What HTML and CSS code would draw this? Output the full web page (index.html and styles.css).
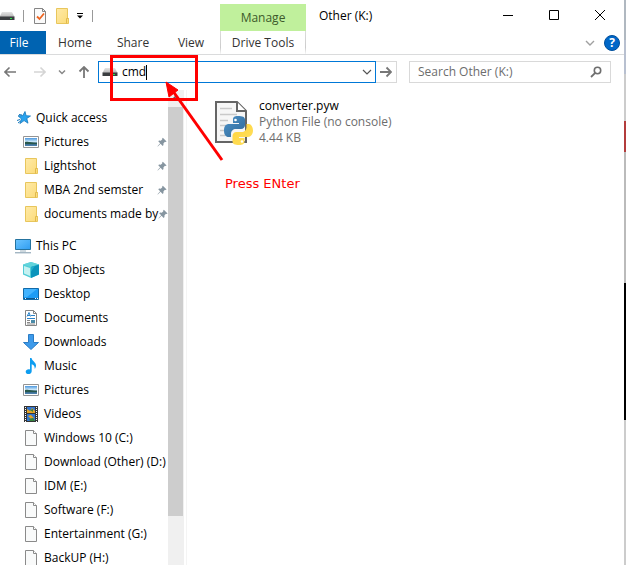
FILE: index.html
```html
<!DOCTYPE html>
<html lang="en">
<head>
<meta charset="utf-8">
<title>Other (K:)</title>
<link rel="stylesheet" href="styles.css">
</head>
<body>
<svg class="defs" aria-hidden="true">
  <defs>
    <linearGradient id="sky" x1="0" y1="0" x2="1" y2="1"><stop offset="0" stop-color="#6cc5ff"/><stop offset="1" stop-color="#2f9df0"/></linearGradient>
    <linearGradient id="photo" x1="0" y1="0" x2="0" y2="1"><stop offset="0" stop-color="#4c97de"/><stop offset=".5" stop-color="#d9f0fb"/><stop offset=".6" stop-color="#2d5968"/><stop offset="1" stop-color="#4f86b8"/></linearGradient>
    <linearGradient id="metal" x1="0" y1="0" x2="0" y2="1"><stop offset="0" stop-color="#e4e4e4"/><stop offset="1" stop-color="#b5b5b5"/></linearGradient>
    <linearGradient id="fold" x1="0" y1="0" x2="1" y2="1"><stop offset="0" stop-color="#ffeaa8"/><stop offset="1" stop-color="#fbdb78"/></linearGradient>
    <linearGradient id="pyblue" x1="0" y1="0" x2="1" y2="1"><stop offset="0" stop-color="#4d92c8"/><stop offset="1" stop-color="#306998"/></linearGradient>
    <linearGradient id="pyyellow" x1="0" y1="0" x2="1" y2="1"><stop offset="0" stop-color="#ffd43b"/><stop offset="1" stop-color="#ffe060"/></linearGradient>
  </defs>
  <symbol id="i-drive" viewBox="0 0 16 16"><path d="M3 4h10l2.500 5H.5z" fill="url(#metal)"/><path d="M.5 8.500h15V12H.5z" fill="#3a3d40"/><path d="M11 10h2v1h-2z" fill="#2be04a"/></symbol>
  <symbol id="i-folder" viewBox="0 0 16 16"><path d="M2.500.5h11v10h1v5h-12z" fill="url(#fold)" stroke="#e8c65c"/><path d="M12.500 15.500v-5h2" fill="none" stroke="#e0b94d"/></symbol>
  <symbol id="i-star" viewBox="0 0 16 16"><path d="M10 1.500l1.100 4.200 4.400.3-3.700 2.500 1.200 4.700-3.900-2.600-4.200 3 1.500-4.700L3 5.800l4.800-.2z" fill="#2aa3ee" stroke="#1679bd" stroke-width=".8"/><path d="M2 10.500l3-1M3 13l2.500-2M4 4.500l3 .5" stroke="#1679bd"/></symbol>
  <symbol id="i-picture" viewBox="0 0 16 16"><path d="M.5 2.500h15v11H.5z" fill="#fff" stroke="#949494"/><path d="M2 4h12v8H2z" fill="url(#photo)"/><path d="M2 8c3-1 5 .5 12 1v1H2z" fill="#28584c"/></symbol>
  <symbol id="i-pc" viewBox="0 0 16 16"><path d="M.5 1.500h15v10H.5z" fill="url(#sky)" stroke="#25739f"/><path d="M5 13h6" stroke="#9eb3c0"/><path d="M0 14.800h16" stroke="#7d98aa"/></symbol>
  <symbol id="i-cube" viewBox="0 0 16 16"><path d="M8 0l8 2.500v10L8 16l-8-3.500v-10z" fill="#52ccd6"/><path d="M0 2.500L8 0l8 2.500L8 5z" fill="#62d4dc"/><path d="M8 5l8-2.500v10L8 16z" fill="#0b94bb"/><path d="M1 4l6 2v8l-6-2.500z" fill="#c4f1f1"/><path d="M8 5l4-1.200-4 6z" fill="#22aecb"/></symbol>
  <symbol id="i-desktop" viewBox="0 0 16 16"><path d="M.5 2.500h15v11H.5z" fill="#1c9cf6" stroke="#126aa8"/><path d="M1 3h13L4 11H1z" fill="#43b4ff"/><path d="M1 12.500h14" stroke="#0b568d"/><path d="M2 12.500h1M12 12.500h1M14 12.500h1" stroke="#fff"/></symbol>
  <symbol id="i-doc" viewBox="0 0 16 16"><path d="M2.500.5h8l3 3v12h-11z" fill="#fff" stroke="#858585"/><path d="M10.500.5v3h3" fill="none" stroke="#858585"/><path d="M4 6.500l2-4 1.500 4M4.500 5.500H7M8 5.500h4M4 8.500h8" fill="none" stroke="#2b83c9"/><path d="M4 10.500h3M4 12.500h3M4 14h8" stroke="#888"/><path d="M8 10h4v3H8z" fill="#4b8ba8"/></symbol>
  <symbol id="i-down" viewBox="0 0 16 16"><path d="M5.500.5h5v8h5L8 15.500.5 8.500h5z" fill="#3d9aea" stroke="#2b7cc5"/></symbol>
  <symbol id="i-music" viewBox="0 0 16 16"><path d="M7 0h1.500c.5 3 4.500 4 4.500 7.500 0 1.300-.5 2.500-1.300 3.500.3-3-1.200-4.200-3-4.800V13c0 4-6 4-6 .8 0-2 2.300-3 4.300-2.300z" fill="#0e9df0"/></symbol>
  <symbol id="i-video" viewBox="0 0 16 16"><path d="M1 0h14v16H1z" fill="#353535"/><path d="M4 1h8v6H4zM4 8h8v7H4z" fill="#3375ce"/><path d="M4 3l3 2 2-3 3 3v2H4zM5 10l3-1 3 3-3 1z" fill="#e2a326"/><path d="M7 4l3-1v3zM6 13l4-1 2 3H7z" fill="#38833b"/><path d="M2.500 1v15M13.500 1v15" stroke="#fff" stroke-dasharray="1 1"/></symbol>
  <symbol id="i-file" viewBox="0 0 16 16"><path d="M2.500.5h8l3 3v12h-11z" fill="#f9fafa" stroke="#8a8a8a"/><path d="M10.500.5v3h3" fill="#fff" stroke="#8a8a8a"/></symbol>
  <symbol id="i-pin" viewBox="0 0 12 12"><path d="M7 1l4.500 4.500-1.200.6-.8-.3-1.800 1.900.1 2-1 1-2.500-2.500L1 11.500.6 11l3.200-3.400L1.500 5.200l1-.9 2 .1 1.900-1.700-.2-.9z" fill="#8695a0"/></symbol>
</svg>

<div class="desktop">
  <div class="window">
    <header class="titlebar">
      <div class="quickbar">
        <svg class="ico" viewBox="0 0 16 16"><use href="#i-drive"/></svg>
        <span class="sep"></span>
        <button class="plain" aria-label="Properties"><svg class="ico" viewBox="0 0 16 16"><path d="M2.500.5h8l3 3v12h-11z" fill="#fafafa" stroke="#858585"/><path d="M10.500.5v3h3" fill="none" stroke="#858585"/><path d="M5 8.500l2.500 2.500L12 5.500" fill="none" stroke="#ee6420" stroke-width="1.800"/></svg></button>
        <button class="plain" aria-label="New folder"><svg class="ico" viewBox="0 0 16 16"><use href="#i-folder"/></svg></button>
        <button class="plain" aria-label="Customize toolbar"><svg class="caretdown" viewBox="0 0 8 6"><path d="M1 .5h6" stroke="#000"/><path d="M1 2.500h6L4 5.500z"/></svg></button>
        <span class="sep"></span>
      </div>
      <div class="context">Manage</div>
      <h1 class="title">Other (K:)</h1>
      <div class="controls">
        <button class="plain" aria-label="Minimize"><svg viewBox="0 0 10 10"><path d="M0 5.500h10" stroke="#000"/></svg></button>
        <button class="plain" aria-label="Maximize"><svg viewBox="0 0 10 10"><path d="M.5.5h9v9h-9z" fill="none" stroke="#000"/></svg></button>
        <button class="plain" aria-label="Close"><svg viewBox="0 0 10 10"><path d="M0 0l10 10M10 0L0 10" stroke="#000"/></svg></button>
      </div>
    </header>

    <nav class="ribbon">
      <button class="tab file">File</button>
      <button class="tab">Home</button>
      <button class="tab">Share</button>
      <button class="tab">View</button>
      <button class="tab tools">Drive Tools</button>
      <div class="ribbon-end">
        <button class="plain" aria-label="Expand ribbon"><svg class="chev" viewBox="0 0 10 10"><path d="M1 3l4 4 4-4" fill="none" stroke="#a0a0a0" stroke-width="1.400"/></svg></button>
        <button class="help" aria-label="Help">?</button>
      </div>
    </nav>

    <div class="navrow">
      <div class="arrows">
        <button class="plain" aria-label="Back"><svg viewBox="0 0 12 12"><path d="M12 6H1M5.500 1.500L1 6l4.500 4.500" fill="none" stroke="#777" stroke-width="1.600"/></svg></button>
        <button class="plain" aria-label="Forward"><svg viewBox="0 0 12 12"><path d="M0 6h11M6.500 1.500L11 6l-4.500 4.500" fill="none" stroke="#d5d5d5" stroke-width="1.600"/></svg></button>
        <button class="plain" aria-label="Recent locations"><svg class="small" viewBox="0 0 8 8"><path d="M1 2.500l3 3 3-3" fill="none" stroke="#888" stroke-width="1.500"/></svg></button>
        <button class="plain" aria-label="Up"><svg viewBox="0 0 12 12"><path d="M6 12V1M1.500 5.500L6 1l4.500 4.500" fill="none" stroke="#777" stroke-width="1.800"/></svg></button>
      </div>
      <div class="address">
        <svg class="ico" viewBox="0 0 16 16"><use href="#i-drive"/></svg>
        <input class="path" type="text" value="cmd" aria-label="Address">
        <span class="cursor"></span>
        <button class="plain" aria-label="Previous locations"><svg class="chev" viewBox="0 0 10 10"><path d="M1 3l4 4 4-4" fill="none" stroke="#555" stroke-width="1.200"/></svg></button>
      </div>
      <button class="go" aria-label="Go"><svg viewBox="0 0 12 12"><path d="M0 6h11M6.500 1.500L11 6l-4.500 4.500" fill="none" stroke="#777" stroke-width="1.800"/></svg></button>
      <div class="search">
        <input type="text" placeholder="Search Other (K:)" aria-label="Search Other (K:)">
        <svg viewBox="0 0 12 12"><circle cx="7.500" cy="4.500" r="3.200" fill="none" stroke="#6e6e6e" stroke-width="1.600"/><path d="M5.200 6.800L1 11" stroke="#6e6e6e" stroke-width="1.800"/></svg>
      </div>
    </div>

    <div class="body">
      <aside class="tree">
        <div class="group">
          <a class="row root" href="#"><svg class="ico" viewBox="0 0 16 16"><use href="#i-star"/></svg><span>Quick access</span></a>
          <a class="row" href="#"><svg class="ico" viewBox="0 0 16 16"><use href="#i-picture"/></svg><span>Pictures</span><svg class="pin" viewBox="0 0 12 12"><use href="#i-pin"/></svg></a>
          <a class="row" href="#"><svg class="ico" viewBox="0 0 16 16"><use href="#i-folder"/></svg><span>Lightshot</span><svg class="pin" viewBox="0 0 12 12"><use href="#i-pin"/></svg></a>
          <a class="row" href="#"><svg class="ico" viewBox="0 0 16 16"><use href="#i-folder"/></svg><span>MBA 2nd semster</span><svg class="pin" viewBox="0 0 12 12"><use href="#i-pin"/></svg></a>
          <a class="row" href="#"><svg class="ico" viewBox="0 0 16 16"><use href="#i-folder"/></svg><span>documents made by</span><svg class="pin" viewBox="0 0 12 12"><use href="#i-pin"/></svg></a>
        </div>
        <div class="group">
          <a class="row root" href="#"><svg class="ico" viewBox="0 0 16 16"><use href="#i-pc"/></svg><span>This PC</span></a>
          <a class="row" href="#"><svg class="ico" viewBox="0 0 16 16"><use href="#i-cube"/></svg><span>3D Objects</span></a>
          <a class="row" href="#"><svg class="ico" viewBox="0 0 16 16"><use href="#i-desktop"/></svg><span>Desktop</span></a>
          <a class="row" href="#"><svg class="ico" viewBox="0 0 16 16"><use href="#i-doc"/></svg><span>Documents</span></a>
          <a class="row" href="#"><svg class="ico" viewBox="0 0 16 16"><use href="#i-down"/></svg><span>Downloads</span></a>
          <a class="row" href="#"><svg class="ico" viewBox="0 0 16 16"><use href="#i-music"/></svg><span>Music</span></a>
          <a class="row" href="#"><svg class="ico" viewBox="0 0 16 16"><use href="#i-picture"/></svg><span>Pictures</span></a>
          <a class="row" href="#"><svg class="ico" viewBox="0 0 16 16"><use href="#i-video"/></svg><span>Videos</span></a>
          <a class="row" href="#"><svg class="ico" viewBox="0 0 16 16"><use href="#i-file"/></svg><span>Windows 10 (C:)</span></a>
          <a class="row" href="#"><svg class="ico" viewBox="0 0 16 16"><use href="#i-file"/></svg><span>Download (Other) (D:)</span></a>
          <a class="row" href="#"><svg class="ico" viewBox="0 0 16 16"><use href="#i-file"/></svg><span>IDM (E:)</span></a>
          <a class="row" href="#"><svg class="ico" viewBox="0 0 16 16"><use href="#i-file"/></svg><span>Software (F:)</span></a>
          <a class="row" href="#"><svg class="ico" viewBox="0 0 16 16"><use href="#i-file"/></svg><span>Entertainment (G:)</span></a>
          <a class="row" href="#"><svg class="ico" viewBox="0 0 16 16"><use href="#i-file"/></svg><span>BackUP (H:)</span></a>
        </div>
      </aside>
      <div class="scroll">
        <svg class="scroll-up" viewBox="0 0 15 17"><path d="M4 10l3.500-3.500L11 10" fill="none" stroke="#606060" stroke-width="1.500"/></svg>
        <div class="thumb"></div>
      </div>
      <main class="files">
        <a class="item" href="#">
          <svg class="fileicon" viewBox="0 0 38 44">
            <path d="M1 1h21l9 9v31H1z" fill="#f6f6f6" stroke="#656565" stroke-width="2"/>
            <path d="M22 1v9h9" fill="#fff" stroke="#656565" stroke-width="2"/>
            <path d="M5 7.500h12M5 13.500h17M5 19.500h8M5 24.500h6M5 29.500h5M5 34.500h5" stroke="#c9c9c9" stroke-width="1.500"/>
            <g transform="translate(9 15)">
              <path d="M14 0c-4 0-5 1.500-5 3.500V7h6v1H5C2 8 0 10 0 14.500S2 21 4.500 21H7v-3c0-3 2-5 5-5h5c2.500 0 4-2 4-4V3.500C21 1 18.500 0 14 0z" fill="url(#pyblue)"/>
              <path d="M15 29c4 0 5.500-1.500 5.500-3.500V22H15v-1h9c3 0 5-3 5-6.500S27 8 25 8h-2.500v3c0 3-2 5-5 5h-5c-2.500 0-4 2-4 4v5.500c0 2.500 2.500 3.500 6.500 3.500z" fill="url(#pyyellow)"/>
              <circle cx="11.500" cy="4" r="1.300" fill="#fff"/><circle cx="18" cy="25.500" r="1.300" fill="#fff"/>
            </g>
          </svg>
          <span class="meta"><span class="name">converter.pyw</span><span>Python File (no console)</span><span>4.44 KB</span></span>
        </a>
      </main>
    </div>
  </div>
  <div class="behind"></div>

  <div class="note">
    <svg viewBox="0 0 130 112" aria-hidden="true">
      <path d="M1.500 2.500h85v43h-85z" fill="none" stroke="#f00" stroke-width="3"/>
      <path d="M60 33l52 73" stroke="#f00" stroke-width="3"/>
      <path d="M56 28l12 8-9 7z" fill="#f00" stroke="#f00"/>
    </svg>
    <p>Press ENter</p>
  </div>
</div>
</body>
</html>
```

FILE: styles.css
```css
* { box-sizing: border-box; }

body {
  margin: 0;
  font: 12px/16px "Open Sans", "Noto Sans", sans-serif;
  color: #000;
  background: #fff;
}

button, input {
  font: inherit;
  color: inherit;
  margin: 0;
  padding: 0;
  border: 0;
  background: none;
}

input { min-width: 0; outline: 0; }
a { color: inherit; text-decoration: none; }
svg { display: block; flex: none; }
.defs { position: absolute; width: 0; height: 0; }
.ico { width: 16px; height: 16px; }
.chev { width: 10px; height: 10px; }
.plain { display: flex; align-items: center; justify-content: center; }

.desktop {
  position: relative;
  display: flex;
  height: 100vh;
  overflow: hidden;
}

.window {
  flex: 1;
  min-width: 0;
  display: flex;
  flex-direction: column;
}

.behind {
  width: 2px;
  background: linear-gradient(#b0b8c0 0 40px, #b8c0d0 40px 74px, #ccc 74px 121px, #b33c3c 121px 152px, #bbb 152px 283px, #000 283px 420px, #ccc 420px);
}

/* Title bar */
.titlebar { display: flex; height: 31px; }

.quickbar {
  width: 220px;
  display: flex;
  align-items: center;
  gap: 8px;
  margin-top: 1px;
}

.quickbar > .ico { margin-left: -1px; }
.sep { width: 1px; height: 12px; background: #999; }
.quickbar > .plain + .plain { margin-left: -2px; }
.caretdown { width: 8px; height: 6px; }

.context {
  width: 86px;
  margin-top: 4px;
  display: flex;
  align-items: center;
  justify-content: center;
  background: #c0f09c;
  color: #3d5a2b;
}

.title {
  flex: 1;
  margin: 0;
  padding: 8px 13px;
  font-size: 12px;
  font-weight: 400;
}

.controls { display: flex; margin-right: 1px; }
.controls .plain { width: 46px; height: 30px; }
.controls svg { width: 10px; height: 10px; }

/* Ribbon tabs */
.ribbon {
  display: flex;
  height: 24px;
  border-bottom: 1px solid #dadbdc;
}

.tab { width: 58px; color: #333; }
.tab.file { width: 46px; background: #0063b1; color: #fff; padding-right: 8px; }

.tab.tools {
  width: 86px;
  border: solid;
  border-width: 0 1px;
  border-image: linear-gradient(#ddd, #ccc 70%, #fff) 1;
}

.ribbon-end {
  margin-left: auto;
  display: flex;
  align-items: center;
  gap: 9px;
  padding-right: 4px;
}

.help {
  width: 16px;
  height: 16px;
  border-radius: 50%;
  background: #0067c8;
  border: 1px solid #004f9c;
  color: #fff;
  font-weight: 700;
  line-height: 14px;
}

/* Navigation row */
.navrow { display: flex; padding: 6px 13px 7px 4px; }

.arrows {
  width: 94px;
  display: flex;
  align-items: center;
}

.arrows svg, .go svg, .search svg { width: 12px; height: 12px; }
.arrows .small { width: 8px; height: 8px; }
.arrows .plain + .plain { margin-left: 18px; }
.arrows .plain + .plain:nth-child(n+3) { margin-left: 12px; }

.address {
  position: relative;
  flex: 1;
  height: 22px;
  display: flex;
  align-items: center;
  gap: 4px;
  padding: 0 3px;
  border: 1px solid #0078d7;
}

.path { flex: 1; }

.cursor {
  position: absolute;
  left: 47px;
  top: 3px;
  width: 1px;
  height: 15px;
  background: #000;
}

.go {
  width: 21px;
  display: flex;
  align-items: center;
  justify-content: center;
  border: 1px solid #d9d9d9;
  border-left: 0;
}

.search {
  width: 202px;
  display: flex;
  align-items: center;
  margin-left: 12px;
  padding: 0 8px;
  border: 1px solid #d9d9d9;
}

.search input { flex: 1; }
.search input::placeholder { color: #6d6d6d; opacity: 1; }

/* Tree and files */
.body { flex: 1; min-height: 0; display: flex; }

.tree {
  width: 168px;
  padding-top: 16px;
  overflow: hidden;
  white-space: nowrap;
}

.group + .group { margin-top: 8px; }

.row {
  height: 24px;
  display: flex;
  align-items: center;
  padding-left: 23px;
}

.row .ico { margin-right: 5px; }
.row.root { padding-left: 15px; }
.pin { width: 10px; height: 10px; margin: 0 1px 0 auto; }

.scroll {
  width: 16px;
  display: flex;
  flex-direction: column;
  background: #f0f0f0;
}

.scroll-up { width: 15px; height: 17px; }
.thumb { width: 15px; height: 86%; background: #cdcdcd; }

.files {
  flex: 1;
  margin-left: 2px;
  border-left: 1px solid #f4f4f4;
  padding: 8px 28px;
}

.item { display: flex; gap: 6px; color: #6d6d6d; }
.fileicon { width: 38px; height: 44px; margin-top: 3px; }
.meta { display: flex; flex-direction: column; }
.name { color: #000; }

/* Annotation over the window */
.note {
  position: absolute;
  left: 110px;
  top: 54px;
  color: #f00;
  pointer-events: none;
}

.note svg { width: 130px; height: 112px; }
.note p { margin: 10px 0 0 115px; font: 13px/16px "DejaVu Sans", sans-serif; }
```
